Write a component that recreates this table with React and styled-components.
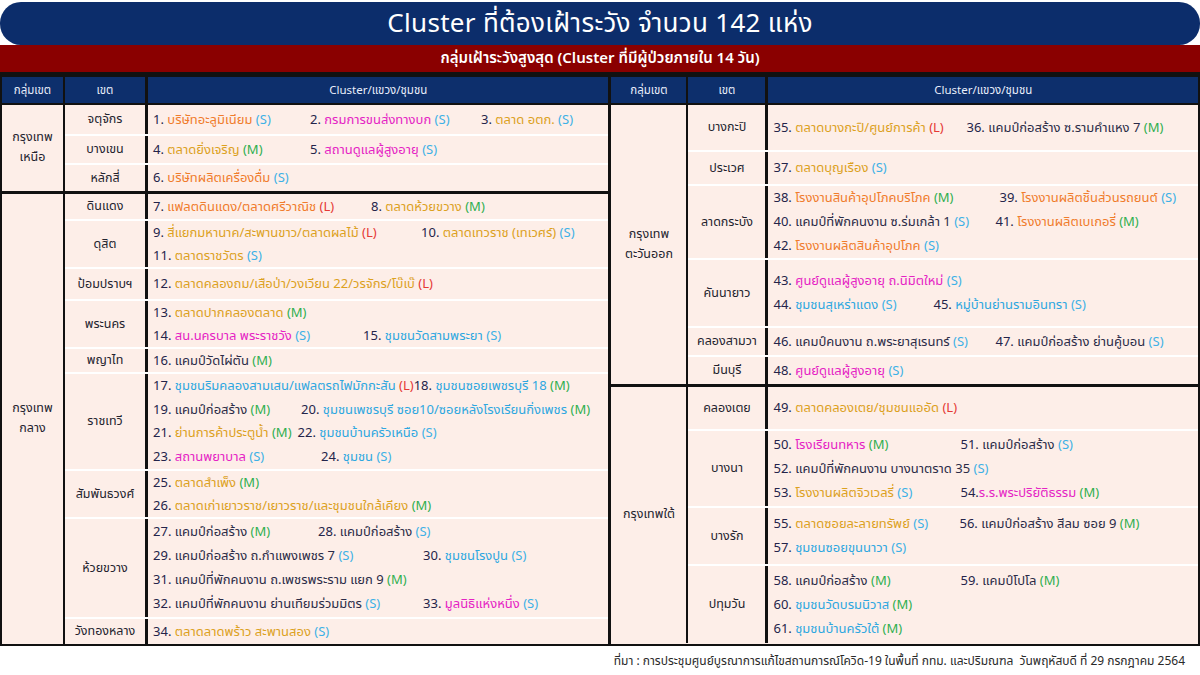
import React from 'react';
import styled, { createGlobalStyle } from 'styled-components';

const GlobalStyle = createGlobalStyle`
  html, body {
    margin: 0;
    padding: 0;
    background: #ffffff;
  }
  body {
    font-family: Tahoma, "Noto Sans Thai", "Noto Sans Thai UI", Loma, Garuda, "Noto Sans", "DejaVu Sans", sans-serif;
  }
`;

const palette = {
  orange: '#f07c2c',
  pink: '#e523c4',
  gold: '#dca11e',
  blue: '#2ea7e0',
  dark: '#2b2b47',
};

const sizeColor = { S: '#3db1e6', M: '#2fae4f', L: '#e53935' };

const left = [
  {
    name: ['กรุงเทพ', 'เหนือ'],
    districts: [
      { name: 'จตุจักร', h: 29, lines: [[
        { n: 1, t: 'บริษัทอะลูมิเนียม', c: 'orange', s: 'S', w: 157 },
        { n: 2, t: 'กรมการขนส่งทางบก', c: 'pink', s: 'S', w: 171 },
        { n: 3, t: 'ตลาด อตก.', c: 'gold', s: 'S' },
      ]] },
      { name: 'บางเขน', h: 29, lines: [[
        { n: 4, t: 'ตลาดยิ่งเจริญ', c: 'gold', s: 'M', w: 157 },
        { n: 5, t: 'สถานดูแลผู้สูงอายุ', c: 'pink', s: 'S' },
      ]] },
      { name: 'หลักสี่', h: 28, lines: [[
        { n: 6, t: 'บริษัทผลิตเครื่องดื่ม', c: 'orange', s: 'S' },
      ]] },
    ],
  },
  {
    name: ['กรุงเทพ', 'กลาง'],
    districts: [
      { name: 'ดินแดง', h: 25, lines: [[
        { n: 7, t: 'แฟลตดินแดง/ตลาดศรีวาณิช', c: 'orange', s: 'L', w: 218 },
        { n: 8, t: 'ตลาดห้วยขวาง', c: 'gold', s: 'M' },
      ]] },
      { name: 'ดุสิต', h: 48, lines: [
        [
          { n: 9, t: 'สี่แยกมหานาค/สะพานขาว/ตลาดผลไม้', c: 'gold', s: 'L', w: 268 },
          { n: 10, t: 'ตลาดเทวราช (เทเวศร์)', c: 'gold', s: 'S' },
        ],
        [{ n: 11, t: 'ตลาดราชวัตร', c: 'gold', s: 'S' }],
      ] },
      { name: 'ป้อมปราบฯ', h: 32, lines: [[
        { n: 12, t: 'ตลาดคลองถม/เสือป่า/วงเวียน 22/วรจักร/โบ๊เบ๊', c: 'gold', s: 'L' },
      ]] },
      { name: 'พระนคร', h: 48, lines: [
        [{ n: 13, t: 'ตลาดปากคลองตลาด', c: 'gold', s: 'M' }],
        [
          { n: 14, t: 'สน.นครบาล พระราชวัง', c: 'pink', s: 'S', w: 210 },
          { n: 15, t: 'ชุมชนวัดสามพระยา', c: 'blue', s: 'S' },
        ],
      ] },
      { name: 'พญาไท', h: 25, lines: [[
        { n: 16, t: 'แคมป์วัดไผ่ตัน', c: 'dark', s: 'M' },
      ]] },
      { name: 'ราชเทวี', h: 97, lines: [
        [
          { n: 17, t: 'ชุมชนริมคลองสามเสน/แฟลตรถไฟมักกะสัน', c: 'blue', s: 'L', flush: true },
          { n: 18, t: 'ชุมชนซอยเพชรบุรี 18', c: 'blue', s: 'M' },
        ],
        [
          { n: 19, t: 'แคมป์ก่อสร้าง', c: 'dark', s: 'M', w: 148 },
          { n: 20, t: 'ชุมชนเพชรบุรี ซอย10/ซอยหลังโรงเรียนกิ่งเพชร', c: 'blue', s: 'M' },
        ],
        [
          { n: 21, t: 'ย่านการค้าประตูน้ำ', c: 'gold', s: 'M', w: 140 },
          { n: 22, t: 'ชุมชนบ้านครัวเหนือ', c: 'blue', s: 'S' },
        ],
        [
          { n: 23, t: 'สถานพยาบาล', c: 'pink', s: 'S', w: 168 },
          { n: 24, t: 'ชุมชน', c: 'blue', s: 'S' },
        ],
      ] },
      { name: 'สัมพันธวงศ์', h: 48, lines: [
        [{ n: 25, t: 'ตลาดสำเพ็ง', c: 'gold', s: 'M' }],
        [{ n: 26, t: 'ตลาดเก่าเยาวราช/เยาวราช/และชุมชนใกล้เคียง', c: 'gold', s: 'M' }],
      ] },
      { name: 'ห้วยขวาง', h: 100, lines: [
        [
          { n: 27, t: 'แคมป์ก่อสร้าง', c: 'dark', s: 'M', w: 165 },
          { n: 28, t: 'แคมป์ก่อสร้าง', c: 'dark', s: 'S' },
        ],
        [
          { n: 29, t: 'แคมป์ก่อสร้าง ถ.กำแพงเพชร 7', c: 'dark', s: 'S', w: 270 },
          { n: 30, t: 'ชุมชนโรงปูน', c: 'blue', s: 'S' },
        ],
        [{ n: 31, t: 'แคมป์ที่พักคนงาน ถ.เพชรพระราม แยก 9', c: 'dark', s: 'M' }],
        [
          { n: 32, t: 'แคมป์ที่พักคนงาน ย่านเทียมร่วมมิตร', c: 'dark', s: 'S', w: 270 },
          { n: 33, t: 'มูลนิธิแห่งหนึ่ง', c: 'pink', s: 'S' },
        ],
      ] },
      { name: 'วังทองหลาง', h: 27, lines: [[
        { n: 34, t: 'ตลาดลาดพร้าว สะพานสอง', c: 'gold', s: 'S' },
      ]] },
    ],
  },
];

const right = [
  {
    name: ['กรุงเทพ', 'ตะวันออก'],
    districts: [
      { name: 'บางกะปิ', h: 45, lines: [[
        { n: 35, t: 'ตลาดบางกะปิ/ศูนย์การค้า', c: 'gold', s: 'L', w: 193 },
        { n: 36, t: 'แคมป์ก่อสร้าง ซ.รามคำแหง 7', c: 'dark', s: 'M' },
      ]] },
      { name: 'ประเวศ', h: 34, lines: [[
        { n: 37, t: 'ตลาดบุญเรือง', c: 'gold', s: 'S' },
      ]] },
      { name: 'ลาดกระบัง', h: 74, lines: [
        [
          { n: 38, t: 'โรงงานสินค้าอุปโภคบริโภค', c: 'orange', s: 'M', w: 226 },
          { n: 39, t: 'โรงงานผลิตชิ้นส่วนรถยนต์', c: 'orange', s: 'S' },
        ],
        [
          { n: 40, t: 'แคมป์ที่พักคนงาน ซ.ร่มเกล้า 1', c: 'dark', s: 'S', w: 222 },
          { n: 41, t: 'โรงงานผลิตเบเกอรี่', c: 'orange', s: 'M' },
        ],
        [{ n: 42, t: 'โรงงานผลิตสินค้าอุปโภค', c: 'orange', s: 'S' }],
      ] },
      { name: 'คันนายาว', h: 68, lines: [
        [{ n: 43, t: 'ศูนย์ดูแลผู้สูงอายุ ถ.นิมิตใหม่', c: 'pink', s: 'S' }],
        [
          { n: 44, t: 'ชุมชนสุเหร่าแดง', c: 'blue', s: 'S', w: 160 },
          { n: 45, t: 'หมู่บ้านย่านรามอินทรา', c: 'blue', s: 'S' },
        ],
      ] },
      { name: 'คลองสามวา', h: 29, lines: [[
        { n: 46, t: 'แคมป์คนงาน ถ.พระยาสุเรนทร์', c: 'dark', s: 'S', w: 222 },
        { n: 47, t: 'แคมป์ก่อสร้าง ย่านคู้บอน', c: 'dark', s: 'S' },
      ]] },
      { name: 'มีนบุรี', h: 29, lines: [[
        { n: 48, t: 'ศูนย์ดูแลผู้สูงอายุ', c: 'pink', s: 'S' },
      ]] },
    ],
  },
  {
    name: ['กรุงเทพใต้'],
    districts: [
      { name: 'คลองเตย', h: 42, lines: [[
        { n: 49, t: 'ตลาดคลองเตย/ชุมชนแออัด', c: 'gold', s: 'L' },
      ]] },
      { name: 'บางนา', h: 77, lines: [
        [
          { n: 50, t: 'โรงเรียนทหาร', c: 'pink', s: 'M', w: 187 },
          { n: 51, t: 'แคมป์ก่อสร้าง', c: 'dark', s: 'S' },
        ],
        [{ n: 52, t: 'แคมป์ที่พักคนงาน บางนาตราด 35', c: 'dark', s: 'S' }],
        [
          { n: 53, t: 'โรงงานผลิตจิวเวลรี่', c: 'gold', s: 'S', w: 187 },
          { n: 54, t: 'ร.ร.พระปริยัติธรรม', c: 'pink', s: 'M', tight: true },
        ],
      ] },
      { name: 'บางรัก', h: 58, lines: [
        [
          { n: 55, t: 'ตลาดซอยละลายทรัพย์', c: 'gold', s: 'S', w: 186 },
          { n: 56, t: 'แคมป์ก่อสร้าง สีลม ซอย 9', c: 'dark', s: 'M' },
        ],
        [{ n: 57, t: 'ชุมชนซอยขุนนาวา', c: 'blue', s: 'S' }],
      ] },
      { name: 'ปทุมวัน', h: 79, lines: [
        [
          { n: 58, t: 'แคมป์ก่อสร้าง', c: 'dark', s: 'M', w: 187 },
          { n: 59, t: 'แคมป์โปโล', c: 'dark', s: 'M' },
        ],
        [{ n: 60, t: 'ชุมชนวัดบรมนิวาส', c: 'blue', s: 'M' }],
        [{ n: 61, t: 'ชุมชนบ้านครัวใต้', c: 'blue', s: 'M' }],
      ] },
    ],
  },
];

const Page = styled.div`
  width: 1200px;
  height: 675px;
  display: flex;
  flex-direction: column;
  overflow: hidden;
`;

const TitleBar = styled.div`
  height: 43px;
  margin-top: 2px;
  background: #0c2d6b;
  border-radius: 21px;
  display: flex;
  align-items: center;
  justify-content: center;
  color: #ffffff;
  font-size: 26px;
  letter-spacing: 0.3px;
`;

const AlertBar = styled.div`
  height: 27px;
  background: #8a0000;
  display: flex;
  align-items: center;
  justify-content: center;
  color: #ffffff;
  font-size: 15px;
  font-weight: 600;
`;

const Table = styled.div`
  display: flex;
  border: 2px solid #111111;
  border-top-width: 5px;
  background: #fdeee8;
`;

const Half = styled.div`
  width: ${(p) => p.$w}px;
  display: flex;
  flex-direction: column;
  & + & {
    border-left: 3px solid #111111;
  }
`;

const HeaderRow = styled.div`
  height: 26px;
  display: flex;
  background: #0d2f6c;
  border-bottom: 2px solid #111111;
`;

const HeaderCell = styled.div`
  width: ${(p) => (p.$w ? `${p.$w}px` : 'auto')};
  flex: ${(p) => (p.$w ? '0 0 auto' : '1')};
  display: flex;
  align-items: center;
  justify-content: center;
  color: #e9eefb;
  font-size: 11.5px;
  border-right: ${(p) => p.$line}px solid #111111;
`;

const Group = styled.div`
  display: flex;
  & + & {
    border-top: 3px solid #111111;
  }
`;

const GroupCell = styled.div`
  width: ${(p) => p.$w}px;
  flex: 0 0 auto;
  border-right: 2px solid #111111;
  display: flex;
  flex-direction: column;
  align-items: center;
  justify-content: center;
  color: #23232e;
  font-size: 12.5px;
  line-height: 20px;
`;

const DistrictList = styled.div`
  flex: 1;
  display: flex;
  flex-direction: column;
`;

const District = styled.div`
  height: ${(p) => p.$h}px;
  box-sizing: border-box;
  display: flex;
  & + & {
    border-top: 2px solid #ffffff;
  }
`;

const DistrictName = styled.div`
  width: ${(p) => p.$w}px;
  flex: 0 0 auto;
  border-right: 3px solid #111111;
  display: flex;
  align-items: center;
  justify-content: center;
  color: #23232e;
  font-size: 12.5px;
  white-space: nowrap;
`;

const Content = styled.div`
  flex: 1;
  min-width: 0;
  overflow: hidden;
  display: flex;
  flex-direction: column;
  justify-content: center;
  padding-left: 5px;
`;

const Line = styled.div`
  height: 24px;
  display: flex;
  align-items: center;
  white-space: nowrap;
  font-size: 13px;
`;

const Item = styled.span`
  flex: 0 0 auto;
  box-sizing: border-box;
  min-width: ${(p) => (p.$w ? `${p.$w}px` : '0')};
  padding-right: ${(p) => (p.$flush ? '0' : '6px')};
`;

const Num = styled.span`
  color: #24244a;
`;

const Name = styled.span`
  color: ${(p) => palette[p.$c]};
`;

const Size = styled.span`
  color: ${(p) => sizeColor[p.$s]};
`;

const Footer = styled.div`
  flex: 1;
  display: flex;
  align-items: center;
  justify-content: flex-end;
  padding-right: 15px;
  color: #2a2a2a;
  font-size: 12px;
`;

const Entry = ({ item }) => (
  <Item $w={item.w} $flush={item.flush}>
    <Num>{item.n}.{item.tight ? '' : ' '}</Num>
    <Name $c={item.c}>{item.t}</Name>{' '}
    <Size $s={item.s}>({item.s})</Size>
  </Item>
);

const Side = ({ data, width, groupW, districtW }) => (
  <Half $w={width}>
    <HeaderRow>
      <HeaderCell $w={groupW} $line={2}>กลุ่มเขต</HeaderCell>
      <HeaderCell $w={districtW} $line={3}>เขต</HeaderCell>
      <HeaderCell $line={0}>Cluster/แขวง/ชุมชน</HeaderCell>
    </HeaderRow>
    {data.map((g) => (
      <Group key={g.name.join('')}>
        <GroupCell $w={groupW}>
          {g.name.map((part) => (
            <span key={part}>{part}</span>
          ))}
        </GroupCell>
        <DistrictList>
          {g.districts.map((d) => (
            <District key={d.name} $h={d.h}>
              <DistrictName $w={districtW}>{d.name}</DistrictName>
              <Content>
                {d.lines.map((line, i) => (
                  <Line key={i}>
                    {line.map((item) => (
                      <Entry key={item.n} item={item} />
                    ))}
                  </Line>
                ))}
              </Content>
            </District>
          ))}
        </DistrictList>
      </Group>
    ))}
  </Half>
);

const App = () => (
  <>
    <GlobalStyle />
    <Page>
      <TitleBar>Cluster ที่ต้องเฝ้าระวัง จำนวน 142 แห่ง</TitleBar>
      <AlertBar>กลุ่มเฝ้าระวังสูงสุด (Cluster ที่มีผู้ป่วยภายใน 14 วัน)</AlertBar>
      <Table>
        <Side data={left} width={608} groupW={61} districtW={80} />
        <Side data={right} width={588} groupW={75} districtW={77} />
      </Table>
      <Footer>
        ที่มา : การประชุมศูนย์บูรณาการแก้ไขสถานการณ์โควิด-19 ในพื้นที่ กทม. และปริมณฑล&nbsp;&nbsp;วันพฤหัสบดี ที่ 29 กรกฎาคม 2564
      </Footer>
    </Page>
  </>
);

export default App;
